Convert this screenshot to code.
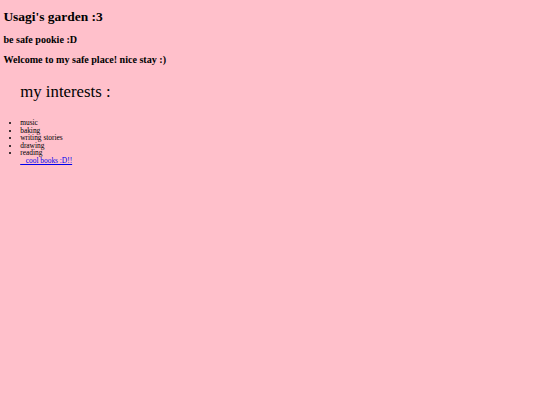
export default function App() {
  const interests = ['music', 'baking', 'writing stories', 'drawing'];

  return (
    <div className="min-h-[405px] bg-[#ffc0cb] px-[3.4px] py-[0.1px] text-black font-['Liberation_Serif',serif] text-[6.72px]">
      <h1 className="my-[9px] text-[13.44px] font-bold leading-[1.15]">Usagi's garden :3</h1>
      <h2 className="my-[8.4px] text-[10.08px] font-bold leading-[1.15]">be safe pookie :D</h2>
      <h2 className="my-[8.4px] text-[10.08px] font-bold leading-[1.15]">Welcome to my safe place! nice stay :)</h2>

      <p className="my-[16.8px] ml-[16.8px] text-[16.8px] leading-[1.15]">my interests :</p>

      <ul className="mt-[17.8px] mb-[6.7px] list-disc pl-[16.8px] text-[7.4px] leading-[7.6px]">
        {interests.map(item => (
          <li key={item}>{item}</li>
        ))}
        <li>
          reading
          <br />
          <a href="#" className="text-[#0000ee] underline">
            {'\u00a0\u00a0\u00a0cool books :D!!'}
          </a>
        </li>
      </ul>
    </div>
  );
}
